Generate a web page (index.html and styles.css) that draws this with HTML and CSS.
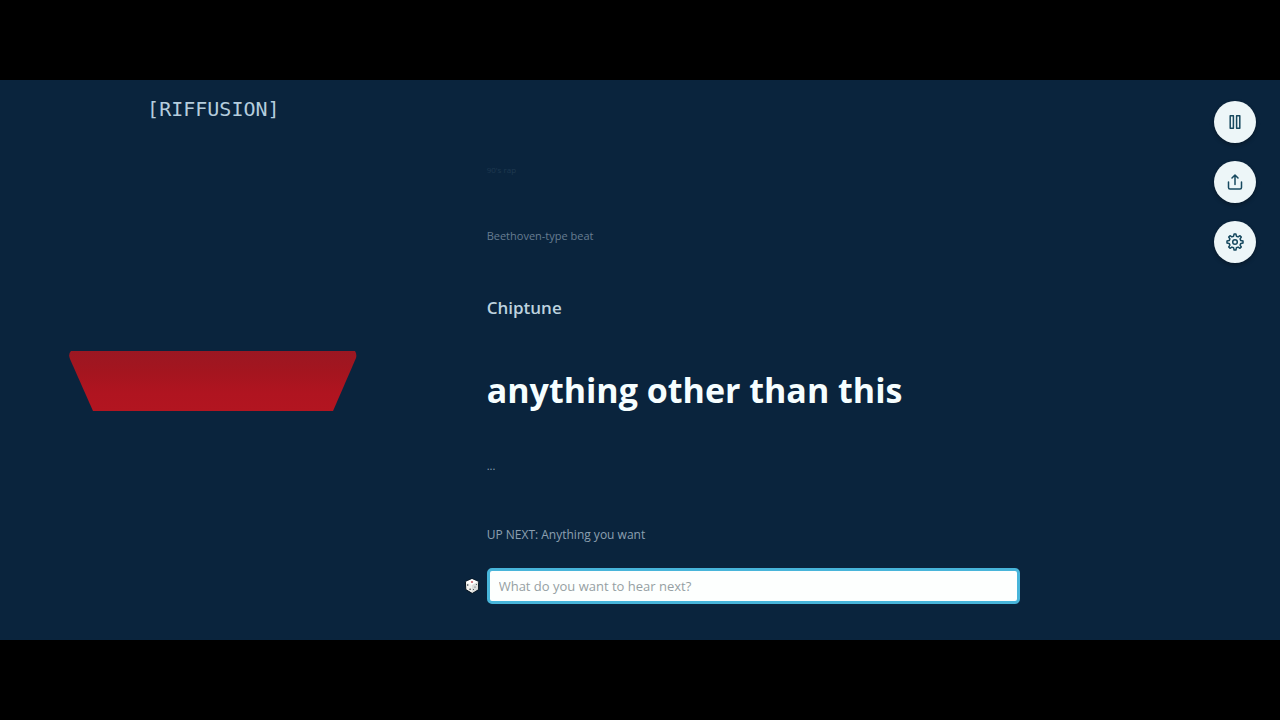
FILE: index.html
```html
<!DOCTYPE html>
<html lang="en">
<head>
    <meta charset="UTF-8">
    <title>Riffusion</title>
    <link rel="stylesheet" href="styles.css">
</head>
<body>
    <main class="player">
        <div class="visual">
            <h1 class="logo">[RIFFUSION]</h1>
            <svg class="spectrogram" viewBox="0 0 288 60" aria-hidden="true">
                <defs>
                    <linearGradient id="red" x1="0" y1="0" x2="0" y2="1">
                        <stop offset="0" stop-color="#9b1722"/>
                        <stop offset="0.35" stop-color="#a4151f"/>
                        <stop offset="0.7" stop-color="#b01420"/>
                        <stop offset="1" stop-color="#b21520"/>
                    </linearGradient>
                </defs>
                <path d="M2 0H286Q288 3 287 7L264 60H24L1 8Q-1 3 2 0Z" fill="url(#red)"/>
            </svg>
        </div>
        <div class="content">
            <div class="prompts">
                <p class="prompt oldest">90's rap</p>
                <p class="prompt older">Beethoven-type beat</p>
                <p class="prompt previous">Chiptune</p>
                <p class="prompt current">anything other than this</p>
                <p class="prompt waiting">...</p>
            </div>
            <p class="up-next">UP NEXT: Anything you want</p>
            <form class="prompt-form">
                <button type="button" class="dice" aria-label="Random prompt">
                    <svg viewBox="0 0 16 16">
                        <path d="M8 .7L14.6 3.8 14.2 11.6 8 15.3 1.8 11.6 1.4 3.8Z" fill="#f1f1ee" stroke="#03101c" stroke-width="1"/>
                        <path d="M8 1L14.2 3.8 8 7 1.8 3.8Z" fill="#fff"/>
                        <path d="M8 7L14.2 3.8 13.8 11.4 8 15Z" fill="#dcdedd"/>
                        <ellipse cx="8" cy="4" rx="1.2" ry=".8" fill="#b33036"/>
                        <g fill="#26313a">
                            <circle cx="3.7" cy="7" r=".8"/>
                            <circle cx="6.1" cy="11.2" r=".8"/>
                            <circle cx="12.4" cy="6.6" r=".5"/>
                            <circle cx="11" cy="9" r=".5"/>
                            <circle cx="9.5" cy="11.6" r=".5"/>
                        </g>
                    </svg>
                </button>
                <input type="text" class="prompt-input" aria-label="Next prompt" placeholder="What do you want to hear next?">
            </form>
        </div>
        <div class="actions">
            <button type="button" class="action" aria-label="Pause">
                <svg viewBox="0 0 16 16">
                    <path d="M3.2 1.8H6.4V14.2H3.2ZM9.6 1.8H12.8V14.2H9.6Z"/>
                </svg>
            </button>
            <button type="button" class="action" aria-label="Share">
                <svg viewBox="0 0 16 16">
                    <path d="M8 10.5V1.2M5 4L8 1 11 4M1.5 8V13.5Q1.5 15 3 15H13Q14.5 15 14.5 13.5V8"/>
                </svg>
            </button>
            <button type="button" class="action" aria-label="Settings">
                <svg class="gear" viewBox="0 0 18 18">
                    <path d="M7.6 3.2L8.1 1H9.9L10.4 3.2 12.1 3.9 14 2.7 15.3 4 14.1 5.9 14.8 7.6 17 8.1V9.9L14.8 10.4 14.1 12.1 15.3 14 14 15.3 12.1 14.1 10.4 14.8 9.9 17H8.1L7.6 14.8 5.9 14.1 4 15.3 2.7 14 3.9 12.1 3.2 10.4 1 9.9V8.1L3.2 7.6 3.9 5.9 2.7 4 4 2.7 5.9 3.9Z"/>
                    <circle cx="9" cy="9" r="2.3"/>
                </svg>
            </button>
        </div>
    </main>
</body>
</html>
```
FILE: styles.css
```css
* {
    box-sizing: border-box;
}
body {
    margin: 0;
    padding: 80px 0;
    min-height: 100vh;
    display: flex;
    background-color: #000;
    font-family: "Segoe UI", "Open Sans", "Noto Sans", sans-serif;
    font-size: 12px;
    line-height: 18px;
}
h1, p {
    margin: 0;
}
button {
    padding: 0;
    border: none;
    cursor: pointer;
}
button svg {
    display: block;
}
.player {
    position: relative;
    flex: 1;
    display: grid;
    grid-template-columns: 1fr 2fr;
    background-color: #0a243d;
    color: #8da0b1;
}
.visual {
    display: flex;
    flex-direction: column;
    align-items: center;
    gap: 227px;
    padding-top: 14px;
}
.logo {
    font-family: "DejaVu Sans Mono", monospace;
    font-size: 20px;
    font-weight: normal;
    line-height: 30px;
    color: #b5cddd;
}
.spectrogram {
    width: 288px;
}
.content {
    padding: 81px 0 36px 37px;
}
.prompts {
    display: flex;
    flex-direction: column;
    gap: 48px;
    padding-left: 23px;
}
.oldest {
    font-size: 8px;
    color: #1f3950;
}
.older {
    font-size: 11px;
    color: #677d91;
}
.previous {
    font-size: 17px;
    font-weight: 600;
    line-height: 30px;
    color: #bdd2df;
}
.current {
    font-size: 34px;
    font-weight: bold;
    line-height: 38px;
    color: #f6feff;
}
.waiting {
    font-size: 11px;
}
.up-next {
    margin: 51px 0 24px;
    padding-left: 23px;
}
.prompt-form {
    display: flex;
    align-items: center;
    gap: 7px;
}
.dice {
    width: 16px;
    background: none;
}
.prompt-input {
    width: 533px;
    max-width: 100%;
    height: 36px;
    padding: 0 9px;
    border: 3px solid #48b5da;
    border-radius: 5px;
    background-color: #fdfffe;
    font: inherit;
    font-size: 13px;
    outline: none;
}
.prompt-input::placeholder {
    color: #969fa3;
}
.actions {
    position: absolute;
    top: 21px;
    right: 24px;
    display: flex;
    flex-direction: column;
    gap: 18px;
}
.action {
    display: flex;
    align-items: center;
    justify-content: center;
    width: 42px;
    height: 42px;
    border-radius: 50%;
    background-color: #edf6f8;
    box-shadow: 0 2px 4px rgba(0, 0, 0, 0.3);
}
.action svg {
    width: 16px;
    fill: none;
    stroke: #17495f;
    stroke-width: 1.5;
    stroke-linecap: round;
    stroke-linejoin: round;
}
.action .gear {
    width: 18px;
}
```
